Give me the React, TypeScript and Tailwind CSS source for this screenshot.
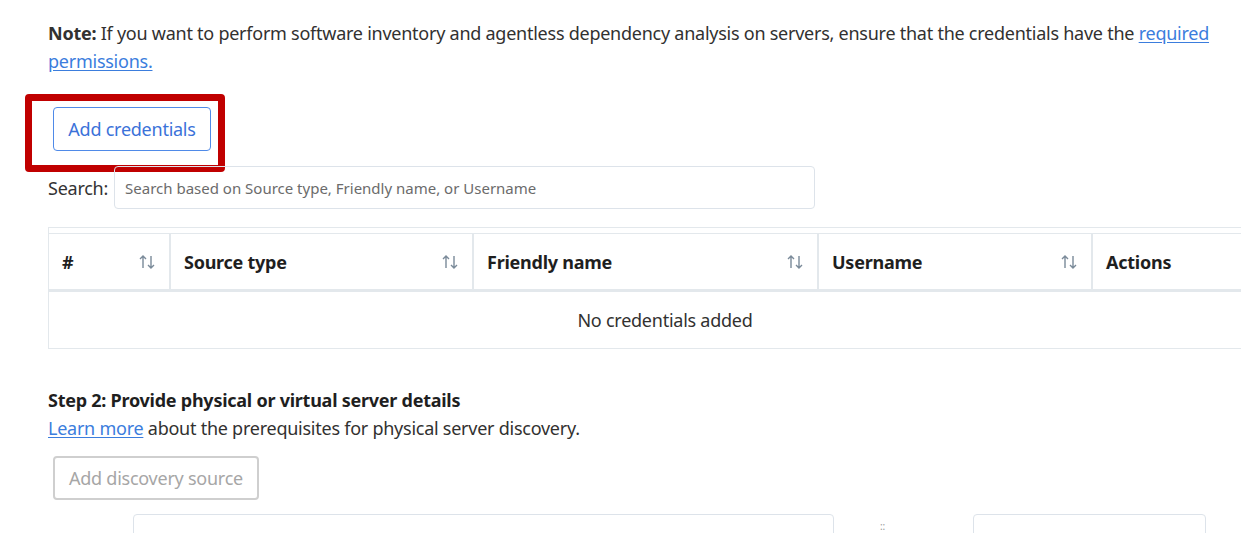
import type { ReactNode } from 'react'

const font = { fontFamily: '"Noto Sans", "Open Sans", sans-serif' }

const columns = [
  { label: '#', width: 'w-[121px]', sortable: true },
  { label: 'Source type', width: 'w-[303px]', sortable: true },
  { label: 'Friendly name', width: 'w-[345px]', sortable: true },
  { label: 'Username', width: 'w-[274px]', sortable: true },
  { label: 'Actions', width: 'w-[189px]', sortable: false },
]

function SortIcon() {
  return (
    <svg width="18" height="16" viewBox="0 0 18 16" className="shrink-0" aria-hidden>
      <path d="M5 14V2M2 5l3-3 3 3" fill="none" stroke="#7a8a99" strokeWidth="1.4" />
      <path d="M13 2v12M10 11l3 3 3-3" fill="none" stroke="#7a8a99" strokeWidth="1.4" />
    </svg>
  )
}

function Link({ children }: { children: ReactNode }) {
  return <a className="text-[#3b7ddd] underline underline-offset-2 cursor-pointer">{children}</a>
}

export default function App() {
  return (
    <div
      className="w-[1241px] h-[533px] overflow-hidden bg-white text-[#323130] pl-[48px] pt-[19px] text-[18px] leading-[28px] tracking-[-0.25px]"
      style={font}
    >
      {/* Note */}
      <p className="pr-[30px]">
        <b className="font-bold">Note:</b> If you want to perform software inventory and agentless dependency
        analysis on servers, ensure that the credentials have the <Link>required permissions.</Link>
      </p>

      {/* Highlighted button */}
      <div className="mt-[19px] -ml-[23px] w-[200px] h-[78px] border-[7px] border-[#c00000] rounded-[4px] flex items-start pl-[21px] pt-[6px]">
        <button className="h-[44px] w-[158px] rounded-[4px] border border-[#4f8ae8] text-[#3b72d9] text-[18px]">
          Add credentials
        </button>
      </div>

      {/* Search */}
      <div className="-mt-[6px] flex items-center gap-[6px]">
        <span className="text-[#333]">Search:</span>
        <div className="w-[701px] h-[43px] border border-[#dde3ea] rounded-[4px] flex items-center px-[10px]">
          <span className="text-[15px] text-[#6b6b6b] tracking-normal">
            Search based on Source type, Friendly name, or Username
          </span>
        </div>
      </div>

      {/* Table */}
      <div className="mt-[18px] w-[1232px] border border-[#e3e8ec] pt-[5px]">
        <table className="w-full border-collapse table-fixed">
          <thead>
            <tr className="h-[57px] border-t border-b-[3px] border-[#e3e8ec]">
              {columns.map((c, i) => (
                <th
                  key={c.label}
                  className={`${c.width} ${i > 0 ? 'border-l-2 border-[#e3e8ec]' : ''} px-[13px] text-left font-bold text-[#1f1f1f]`}
                >
                  <div className="flex items-center justify-between">
                    <span className="text-[18px]">{c.label}</span>
                    {c.sortable && <SortIcon />}
                  </div>
                </th>
              ))}
            </tr>
          </thead>
          <tbody>
            <tr className="h-[57px]">
              <td colSpan={5} className="text-center text-[#323130]">
                No credentials added
              </td>
            </tr>
          </tbody>
        </table>
      </div>

      {/* Step 2 */}
      <h3 className="mt-[37px] font-bold text-[#1f1f1f]">Step 2: Provide physical or virtual server details</h3>
      <p>
        <Link>Learn more</Link> about the prerequisites for physical server discovery.
      </p>
      <button
        disabled
        className="mt-[14px] ml-[5px] h-[44px] w-[206px] rounded-[4px] border-2 border-[#cfcfcf] text-[#a6a6a6] text-[18px]"
      >
        Add discovery source
      </button>

      {/* Partially visible form row */}
      <div className="mt-[14px] flex items-start">
        <div className="ml-[85px] w-[701px] h-[40px] border border-[#dde3ea] rounded-[4px]" />
        <span className="ml-[46px] mt-[6px] text-[10px] leading-[12px] text-[#999]">::</span>
        <div className="ml-[88px] w-[233px] h-[40px] border border-[#dde3ea] rounded-[4px]" />
      </div>
    </div>
  )
}
